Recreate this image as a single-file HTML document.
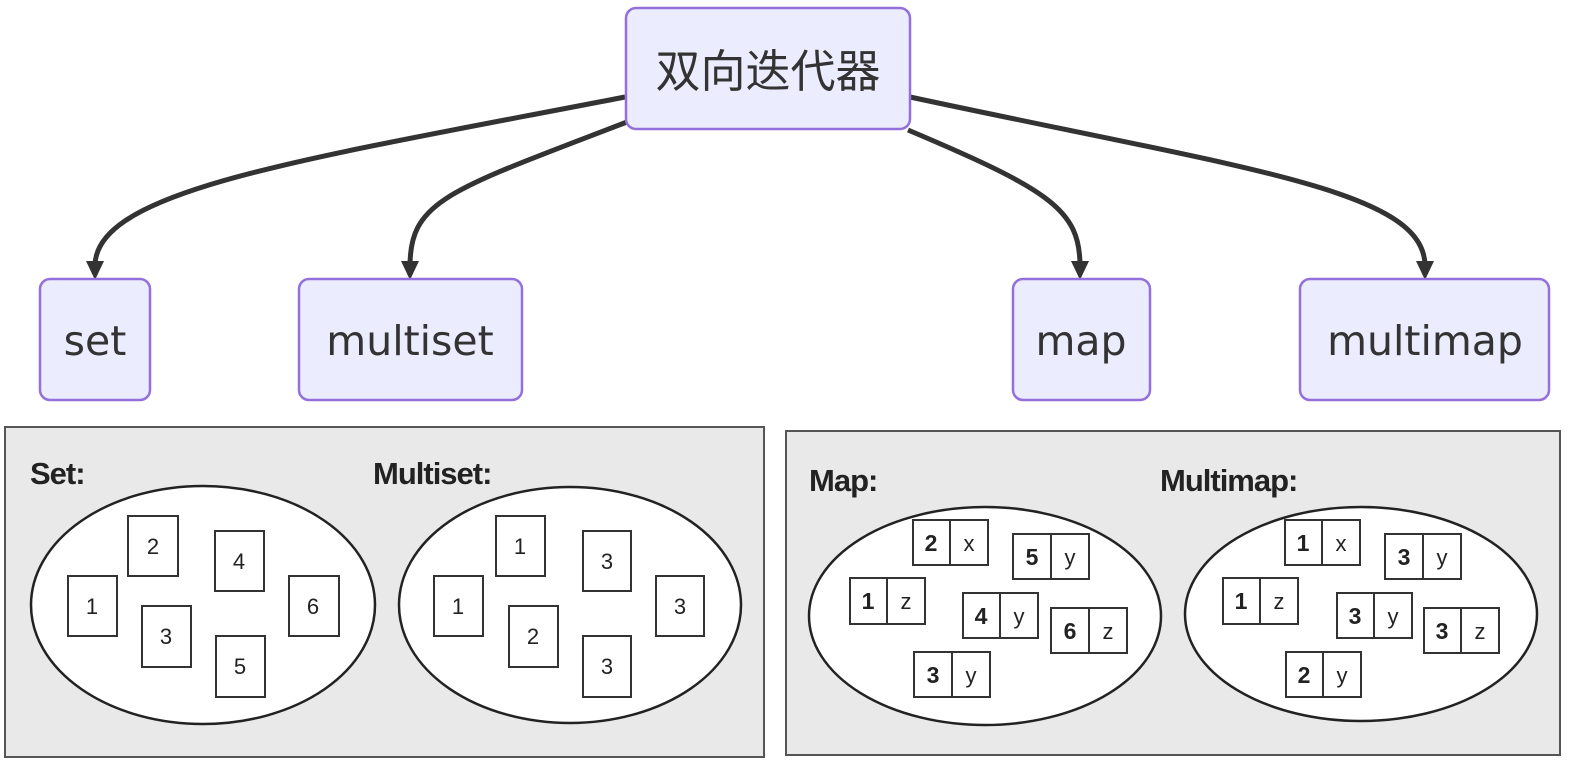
<!DOCTYPE html>
<html><head><meta charset="utf-8"><style>
html,body{margin:0;padding:0;background:#fff;width:1573px;height:762px;overflow:hidden}
svg{display:block}
.n{fill:#ECECFF;stroke:#9370DB;stroke-width:2.5}
.t{font-family:"DejaVu Sans","Liberation Sans","Noto Sans CJK SC",sans-serif;font-size:41px;fill:#333;text-anchor:middle}
.e{fill:none;stroke:#333;stroke-width:5}
.h{font-family:"Liberation Sans",sans-serif;font-weight:bold;font-size:31px;fill:#222;letter-spacing:-1px}
.b{fill:#fff;stroke:#333;stroke-width:2}
.d{font-family:"Liberation Sans",sans-serif;font-size:22px;fill:#222;text-anchor:middle}
.db{font-family:"Liberation Sans",sans-serif;font-size:23px;font-weight:bold;fill:#222;text-anchor:middle}
</style></head><body>
<svg width="1573" height="762" viewBox="0 0 1573 762">
<path class="e" d="M625,97 C300,160 95,190 95,266"/>
<path class="e" d="M627,122 C450,190 410,200 410,266"/>
<path class="e" d="M908,130 C1050,190 1080,210 1080,266"/>
<path class="e" d="M910,97 C1250,170 1425,190 1425,266"/>
<g fill="#333">
<polygon points="86,261 104,261 95,280"/>
<polygon points="401,261 419,261 410,280"/>
<polygon points="1071,261 1089,261 1080,280"/>
<polygon points="1416,261 1434,261 1425,280"/>
</g>
<rect class="n" x="626" y="8" width="284" height="121" rx="10"/>
<text class="t" x="768" y="87" style="font-family:'Noto Sans CJK SC',sans-serif;font-size:45px">双向迭代器</text>
<rect class="n" x="40" y="279" width="110" height="121" rx="10"/>
<text class="t" x="95" y="355">set</text>
<rect class="n" x="299" y="279" width="223" height="121" rx="10"/>
<text class="t" x="410" y="355">multiset</text>
<rect class="n" x="1013" y="279" width="137" height="121" rx="10"/>
<text class="t" x="1081" y="355">map</text>
<rect class="n" x="1300" y="279" width="249" height="121" rx="10"/>
<text class="t" x="1425" y="355">multimap</text>

<rect x="5" y="427" width="759" height="330" fill="#e9e9e9" stroke="#555" stroke-width="2"/>
<text class="h" x="30" y="484">Set:</text>
<text class="h" x="373" y="484">Multiset:</text>
<ellipse cx="203" cy="605" rx="172" ry="119" fill="#fff" stroke="#222" stroke-width="2.5"/>
<ellipse cx="570" cy="605" rx="171" ry="118" fill="#fff" stroke="#222" stroke-width="2.5"/>
<g>
<rect class="b" x="68" y="576" width="49" height="60"/><text class="d" x="92" y="614">1</text>
<rect class="b" x="128" y="516" width="50" height="60"/><text class="d" x="153" y="554">2</text>
<rect class="b" x="215" y="531" width="49" height="60"/><text class="d" x="239" y="569">4</text>
<rect class="b" x="142" y="606" width="49" height="61"/><text class="d" x="166" y="644">3</text>
<rect class="b" x="216" y="636" width="49" height="61"/><text class="d" x="240" y="674">5</text>
<rect class="b" x="289" y="576" width="50" height="60"/><text class="d" x="313" y="614">6</text>
<rect class="b" x="496" y="516" width="49" height="60"/><text class="d" x="520" y="554">1</text>
<rect class="b" x="583" y="531" width="48" height="60"/><text class="d" x="607" y="569">3</text>
<rect class="b" x="434" y="576" width="49" height="60"/><text class="d" x="458" y="614">1</text>
<rect class="b" x="509" y="606" width="49" height="61"/><text class="d" x="533" y="644">2</text>
<rect class="b" x="583" y="636" width="48" height="61"/><text class="d" x="607" y="674">3</text>
<rect class="b" x="656" y="576" width="48" height="60"/><text class="d" x="680" y="614">3</text>
</g>

<rect x="786" y="431" width="774" height="324" fill="#e9e9e9" stroke="#555" stroke-width="2"/>
<text class="h" x="809" y="491">Map:</text>
<text class="h" x="1160" y="491">Multimap:</text>
<ellipse cx="985" cy="616" rx="176" ry="109" fill="#fff" stroke="#222" stroke-width="2.5"/>
<ellipse cx="1361" cy="614" rx="176" ry="107" fill="#fff" stroke="#222" stroke-width="2.5"/>
<g>
<g transform="translate(913,520)"><rect class="b" width="75" height="45"/><line x1="37" y1="0" x2="37" y2="45" stroke="#333" stroke-width="2"/><text class="db" x="18" y="31">2</text><text class="d" x="56" y="31">x</text></g>
<g transform="translate(1013,534)"><rect class="b" width="76" height="45"/><line x1="38" y1="0" x2="38" y2="45" stroke="#333" stroke-width="2"/><text class="db" x="19" y="31">5</text><text class="d" x="57" y="31">y</text></g>
<g transform="translate(850,578)"><rect class="b" width="75" height="46"/><line x1="37" y1="0" x2="37" y2="46" stroke="#333" stroke-width="2"/><text class="db" x="18" y="31">1</text><text class="d" x="56" y="31">z</text></g>
<g transform="translate(963,593)"><rect class="b" width="75" height="45"/><line x1="37" y1="0" x2="37" y2="45" stroke="#333" stroke-width="2"/><text class="db" x="18" y="31">4</text><text class="d" x="56" y="31">y</text></g>
<g transform="translate(1051,608)"><rect class="b" width="76" height="45"/><line x1="38" y1="0" x2="38" y2="45" stroke="#333" stroke-width="2"/><text class="db" x="19" y="31">6</text><text class="d" x="57" y="31">z</text></g>
<g transform="translate(914,652)"><rect class="b" width="76" height="45"/><line x1="38" y1="0" x2="38" y2="45" stroke="#333" stroke-width="2"/><text class="db" x="19" y="31">3</text><text class="d" x="57" y="31">y</text></g>

<g transform="translate(1285,520)"><rect class="b" width="75" height="45"/><line x1="37" y1="0" x2="37" y2="45" stroke="#333" stroke-width="2"/><text class="db" x="18" y="31">1</text><text class="d" x="56" y="31">x</text></g>
<g transform="translate(1385,534)"><rect class="b" width="76" height="45"/><line x1="38" y1="0" x2="38" y2="45" stroke="#333" stroke-width="2"/><text class="db" x="19" y="31">3</text><text class="d" x="57" y="31">y</text></g>
<g transform="translate(1223,578)"><rect class="b" width="75" height="46"/><line x1="37" y1="0" x2="37" y2="46" stroke="#333" stroke-width="2"/><text class="db" x="18" y="31">1</text><text class="d" x="56" y="31">z</text></g>
<g transform="translate(1337,593)"><rect class="b" width="75" height="45"/><line x1="37" y1="0" x2="37" y2="45" stroke="#333" stroke-width="2"/><text class="db" x="18" y="31">3</text><text class="d" x="56" y="31">y</text></g>
<g transform="translate(1424,608)"><rect class="b" width="75" height="45"/><line x1="37" y1="0" x2="37" y2="45" stroke="#333" stroke-width="2"/><text class="db" x="18" y="31">3</text><text class="d" x="56" y="31">z</text></g>
<g transform="translate(1286,652)"><rect class="b" width="75" height="45"/><line x1="37" y1="0" x2="37" y2="45" stroke="#333" stroke-width="2"/><text class="db" x="18" y="31">2</text><text class="d" x="56" y="31">y</text></g>
</g>
</svg>
</body></html>
